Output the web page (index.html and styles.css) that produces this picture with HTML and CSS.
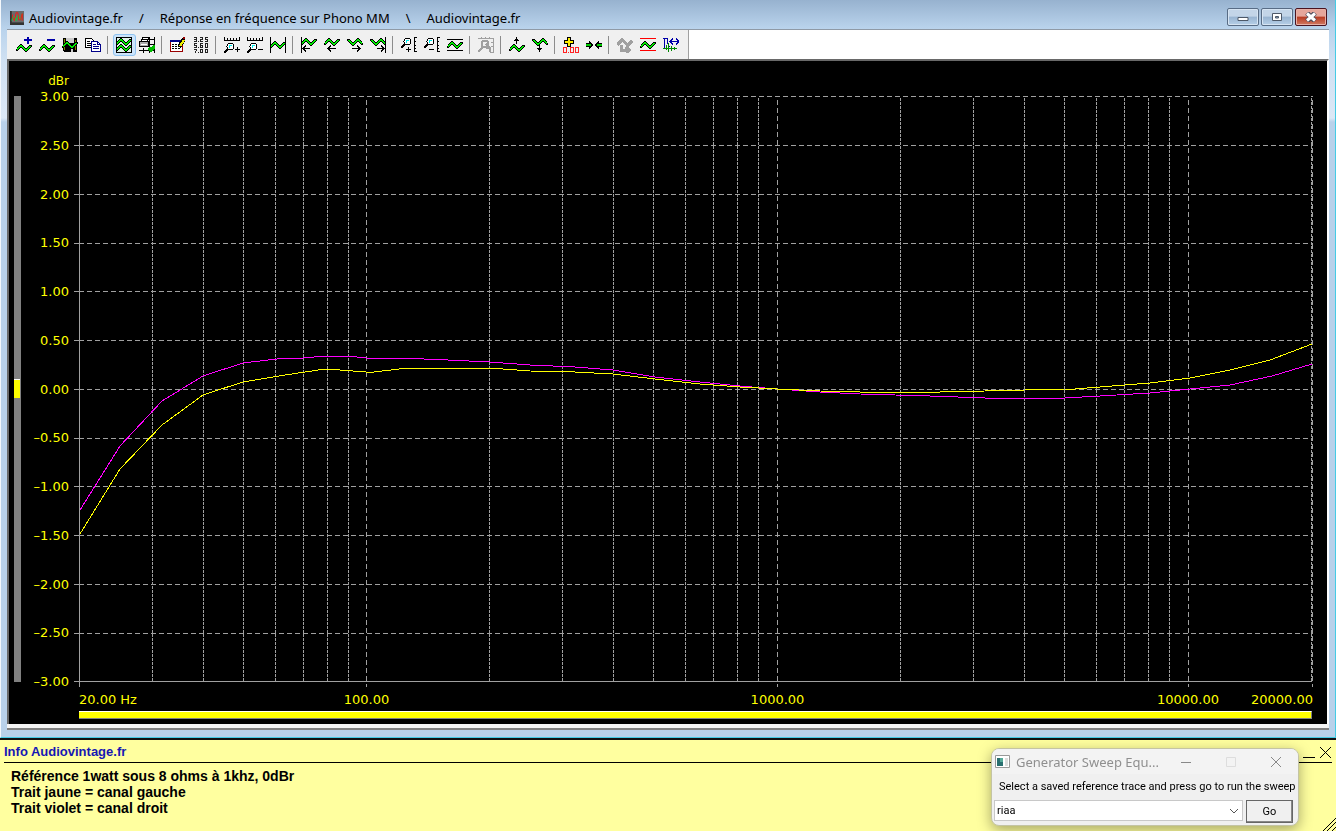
FILE: index.html
```html
<!DOCTYPE html>
<html lang="fr">
<head>
<meta charset="utf-8">
<title>Audiovintage.fr</title>
<link rel="stylesheet" href="styles.css">
</head>
<body>
<svg class="defs" aria-hidden="true">
  <symbol id="wave" viewBox="0 0 16 10"><path d="M.5 6v2M1.500 4v4M2.500 3v4M3.500 2v4M4.500 1v4M5.500 1v4M6.500 2v4M7.500 3v4M8.500 4v4M9.500 5v4M10.500 5v4M11.500 4v4M12.500 3v4M13.500 2v4M14.500 2v3M15.500 2v2" stroke="#000"/><path d="M1.500 5v2M2.500 4v2M3.500 3v2M4.500 2v2M5.500 2v2M6.500 3v2M7.500 4v2M8.500 5v2M9.500 6v2M10.500 6v2M11.500 5v2M12.500 4v2M13.500 3v2M14.500 3v1" stroke="#0e0"/></symbol>
  <symbol id="lens" viewBox="0 0 11 11"><path d="M4 7L0 11" stroke="#000" stroke-width="2"/><circle cx="6.500" cy="4.500" r="3.500" fill="#fff" stroke="#000"/><path d="M5 3h3v1H6v2H5z" fill="#0ee"/></symbol>
  <symbol id="ruler" viewBox="0 0 16 4"><path d="M0 3.500h16M.5 0v3M3.500 1v2M6.500 1v2M9.500 1v2M12.500 1v2M15.500 0v3" fill="none" stroke="#000"/></symbol>
</svg>
<main class="window">
  <header class="titlebar">
    <svg class="app-icon" viewBox="0 0 16 16"><path d="M0 0h16v16H0z" fill="#333"/><path d="M2 0h14v13H2z" fill="#6b6b6b"/><path d="M2 11l2-5 3 5 2-6 3 5 2-7" fill="none" stroke="#0d3"/><path d="M3 4v3l2 4 2-9h2l1 8 2 0 2-7v8" fill="none" stroke="#f11"/></svg>
    <h1 class="title"><span>Audiovintage.fr</span><span>/</span><span>Réponse en fréquence sur Phono MM</span><span>\</span><span>Audiovintage.fr</span></h1>
    <div class="window-buttons">
      <button class="wbtn" aria-label="Réduire"><svg viewBox="0 0 12 10"><path d="M1 5.500h10v3H1z" fill="#fff" stroke="#4d5868"/></svg></button>
      <button class="wbtn" aria-label="Agrandir"><svg viewBox="0 0 12 10"><path d="M1.500 1.500h9v7h-9z" fill="#fff" stroke="#4d5868"/><path d="M4.500 4.500h3v1.500h-3z" fill="#8ba8c6" stroke="#4d5868"/></svg></button>
      <button class="wbtn wbtn-close" aria-label="Fermer"><svg viewBox="0 0 12 10"><path d="M2 1l8 8M10 1L2 9" stroke="#4a4a5a" stroke-width="5"/><path d="M2 1.500l8 7M10 1.500l-8 7" stroke="#fff" stroke-width="3"/></svg></button>
    </div>
  </header>
  <div class="toolbar-row">
    <nav class="toolbar" aria-label="Outils">
      <button aria-label="Ajouter une trace"><svg viewBox="0 0 16 16"><use href="#wave" y="6" width="16" height="10"/><path d="M12 0v7M8 3h8" stroke="#00a" stroke-width="2"/></svg></button>
      <button aria-label="Retirer une trace"><svg viewBox="0 0 16 16"><use href="#wave" y="6" width="16" height="10"/><path d="M8 3h8" stroke="#00a" stroke-width="2"/></svg></button>
      <button aria-label="Enregistrer"><svg viewBox="0 0 16 16"><path d="M1 1h14v14H2l-1-1z" fill="#000"/><path d="M2 2h1v11H2zM13 3h1v10h-1z" fill="#880"/><path d="M4 1h8v5H4zM9 12h2v3H9z" fill="#ccc"/><use href="#wave" y="3" width="16" height="10"/></svg></button>
      <button aria-label="Copier"><svg viewBox="0 0 16 16"><path d="M.5 1.500h6l3 3v6h-9z" fill="#fff" stroke="#000"/><path d="M2 4.500h3M2 6.500h4M2 8.500h4" stroke="#000"/><path d="M6.500 4.500h6l3 3v7h-9z" fill="#fff" stroke="#008"/><path d="M12.500 4.500v3h3M8 7.500h3M8 9.500h6M8 11.500h6" stroke="#008" fill="none"/></svg></button>
      <i class="sep"></i>
      <button class="active" aria-pressed="true" aria-label="Afficher les traces"><svg viewBox="0 0 16 16"><path d="M.5.5h15v15H.5z" fill="#dff3ea" stroke="#000"/><use href="#wave" y="0" width="16" height="10"/><use href="#wave" y="6" width="16" height="10"/><path d="M.5.5h15v15H.5z" fill="none" stroke="#000"/></svg></button>
      <button aria-label="Imprimer"><svg viewBox="0 0 16 16"><path d="M3.500.5h6l-1 4h-6z" fill="#fff" stroke="#000"/><path d="M4 2.500h4" stroke="#000"/><path d="M.5 4.500h9v5h-9z" fill="#aaa" stroke="#000"/><path d="M2 7h6v1H2z" fill="#fff"/><path d="M0 13.500h16M4.500 11v5M10.500 0v16M15.500 0v16M11 2.500h5M11 7.500h5" stroke="#000"/><path d="M10 11l2 2 4-4" fill="none" stroke="#0b0" stroke-width="3"/></svg></button>
      <i class="sep"></i>
      <button aria-label="Modifier le tableau"><svg viewBox="0 0 16 16"><path d="M.5 3.500h12v11H.5z" fill="#fff" stroke="#900"/><path d="M0 3h13v2H0z" fill="#008"/><path d="M2 7.500h9M2 9.500h9M2 11.500h9" stroke="#000" stroke-dasharray="2 1"/><path d="M9 10l5-8" stroke="#000" stroke-width="4"/><path d="M10 9l4-6" stroke="#ee0" stroke-width="2"/><path d="M13 0h2v2h-2z" fill="#900"/></svg></button>
      <button aria-label="Valeurs"><svg viewBox="0 0 16 16"><path d="M1 .5h2.500v4H1M1 2.500h2M7 .5h2.500v2h-2v2H10M15 .5h-2.500v2h2v2H12M4 6.500H1.500v2h2v2H1M10 6.500H7.500v4h2v-2h-2M12.500 6.500h2v4h-2zM1 12.500h2.500l-1 3.500M7.500 12.500h2v3h-2zM12.500 12.500h2v3h-2zM5 4.500h1M5 10.500h1M5 15.500h1" fill="none" stroke="#222"/></svg></button>
      <i class="sep"></i>
      <button aria-label="Zoom avant horizontal"><svg viewBox="0 0 16 16"><use href="#ruler" width="16" height="4"/><use href="#lens" y="5" width="11" height="11"/><path d="M11 12.500h5M13.500 10v5" stroke="#000"/></svg></button>
      <button aria-label="Zoom arrière horizontal"><svg viewBox="0 0 16 16"><use href="#ruler" width="16" height="4"/><use href="#lens" y="5" width="11" height="11"/><path d="M11 12.500h5" stroke="#000"/></svg></button>
      <button aria-label="Ajuster la largeur"><svg viewBox="0 0 16 16"><use href="#wave" y="3" width="16" height="10"/><path d="M.5 0v16M15.500 0v16" stroke="#000"/></svg></button>
      <i class="sep"></i>
      <button aria-label="Début"><svg viewBox="0 0 16 16"><use href="#wave" width="16" height="10"/><path d="M.5 0v16M2 11.500h7M5 8.500l-3 3 3 3" fill="none" stroke="#000"/></svg></button>
      <button aria-label="Vers la gauche"><svg viewBox="0 0 16 16"><use href="#wave" width="16" height="10"/><path d="M4 11.500h8M7 8.500l-3 3 3 3" fill="none" stroke="#000"/></svg></button>
      <button aria-label="Vers la droite"><svg viewBox="0 0 16 16"><g transform="matrix(-1 0 0 1 16 0)"><use href="#wave" width="16" height="10"/></g><path d="M5 11.500h8M10 8.500l3 3-3 3" fill="none" stroke="#000"/></svg></button>
      <button aria-label="Fin"><svg viewBox="0 0 16 16"><g transform="matrix(-1 0 0 1 16 0)"><use href="#wave" width="16" height="10"/></g><path d="M15.500 0v16M7 11.500h7M11 8.500l3 3-3 3" fill="none" stroke="#000"/></svg></button>
      <i class="sep"></i>
      <button aria-label="Zoom avant vertical"><svg viewBox="0 0 16 16"><use href="#lens" width="11" height="11"/><path d="M5 12.500h5M7.500 10v5M16 .5h-2.500v14H16M13 4.500h2M13 8.500h2M13 11.500h2" fill="none" stroke="#000"/></svg></button>
      <button aria-label="Zoom arrière vertical"><svg viewBox="0 0 16 16"><use href="#lens" width="11" height="11"/><path d="M5 12.500h5M16 .5h-2.500v14H16M13 4.500h2M13 8.500h2M13 11.500h2" fill="none" stroke="#000"/></svg></button>
      <button aria-label="Ajuster la hauteur"><svg viewBox="0 0 16 16"><path d="M0 2.500h16M0 13.500h16" stroke="#000"/><use href="#wave" y="3" width="16" height="10"/></svg></button>
      <i class="sep"></i>
      <button disabled aria-label="Annuler le zoom"><svg viewBox="0 0 16 16"><path d="M0 1.500h15.500v14H12M13 5.500h2M13 9.500h2M3.500 0v2M7.500 0v2M11.500 0v2" fill="none" stroke="#a0a0a0"/><circle cx="7" cy="7" r="3.500" fill="none" stroke="#a0a0a0" stroke-width="2"/><path d="M0 15l5-5M8 7l4 4v4M8 11l4 0" fill="none" stroke="#a0a0a0" stroke-width="2"/></svg></button>
      <i class="sep"></i>
      <button aria-label="Monter"><svg viewBox="0 0 16 16"><use href="#wave" y="6" width="16" height="10"/><path d="M7.500 0v7M5 3.500h5M6 2.500h3" fill="none" stroke="#000"/></svg></button>
      <button aria-label="Descendre"><svg viewBox="0 0 16 16"><g transform="matrix(-1 0 0 1 16 0)"><use href="#wave" width="16" height="10"/></g><path d="M7.500 8v7M5 11.500h5M6 12.500h3" fill="none" stroke="#000"/></svg></button>
      <i class="sep"></i>
      <button aria-label="Remettre à zéro"><svg viewBox="0 0 16 16"><path d="M6 0v10M1 5h10" stroke="#000" stroke-width="4"/><path d="M6 1v8M2 5h8" stroke="#fe0" stroke-width="2"/><path d="M.5 10.500h3v5h-3zM7.500 10.500h3v5h-3zM12.500 10.500h3v5h-3zM5 15.500h1" fill="none" stroke="#f22"/></svg></button>
      <button aria-label="Rapprocher"><svg viewBox="0 0 16 16"><path d="M0 6.500h5M0 9.500h5M11 6.500h5M11 9.500h5M3.500 4v2M4.500 5v1M5.500 6v4M6.500 7v2M3.500 10v2M4.500 10v1M12.500 4v2M11.500 5v1M10.500 6v4M9.500 7v2M12.500 10v2M11.500 10v1" stroke="#000"/><path d="M0 8h5M11 8h5" stroke="#0c0" stroke-width="2"/></svg></button>
      <i class="sep"></i>
      <button disabled aria-label="Inverser"><svg viewBox="0 0 16 16"><path d="M0 8l5-5 6 5 4-4M4 8v5h8M9 10l3 3-3 3" fill="none" stroke="#a0a0a0" stroke-width="3"/></svg></button>
      <button aria-label="Limites"><svg viewBox="0 0 16 16"><path d="M0 1.500h16M0 13.500h16" stroke="#f00"/><use href="#wave" y="3" width="16" height="10"/></svg></button>
      <button aria-label="Curseurs"><svg viewBox="0 0 16 16"><path d="M1.500 1v11M0 1.500h5M4.500 1v5l2 4M7 4.500h9M10 1.500L7 4.500l3 3M13 1.500l3 3-3 3" fill="none" stroke="#00a"/><path d="M0 11.500h14M3.500 8v5M5.500 6v9M8.500 9v5M11.500 10v3" stroke="#080"/></svg></button>
    </nav>
  </div>
  <section class="chart" aria-label="Réponse en fréquence">
    <div class="unit">dBr</div>
    <div class="level"><span class="level-thumb"></span></div>
    <ol class="y-axis">
      <li>3.00</li><li>2.50</li><li>2.00</li><li>1.50</li><li>1.00</li><li>0.50</li><li>0.00</li><li>–0.50</li><li>–1.00</li><li>–1.50</li><li>–2.00</li><li>–2.50</li><li>–3.00</li>
    </ol>
    <svg class="plot" viewBox="0 0 1234 586" preserveAspectRatio="none">
      <path class="grid" d="M0 .5H1234M0 49.500H1234M0 98.500H1234M0 147.500H1234M0 195.500H1234M0 244.500H1234M0 293.500H1234M0 342.500H1234M0 390.500H1234M0 439.500H1234M0 488.500H1234M0 537.500H1234"/>
      <path class="grid major" d="M287.500 4V591M698.500 4V591M1109.500 4V591M1233.500 4V591"/>
      <path class="grid minor" d="M73.500 2V586M124.500 2V586M164.500 2V586M196.500 2V586M224.500 2V586M248.500 2V586M269.500 2V586M410.500 2V586M483.500 2V586M534.500 2V586M574.500 2V586M606.500 2V586M634.500 2V586M658.500 2V586M679.500 2V586M821.500 2V586M894.500 2V586M945.500 2V586M985.500 2V586M1017.500 2V586M1045.500 2V586M1069.500 2V586M1090.500 2V586M1232.500 2V586"/>
      <path class="axis" d="M.5 0V591M-5 585.500H1233M-5 .5H0M-5 49.500H0M-5 98.500H0M-5 147.500H0M-5 195.500H0M-5 244.500H0M-5 293.500H0M-5 342.500H0M-5 390.500H0M-5 439.500H0M-5 488.500H0M-5 537.500H0"/>
      <polyline class="trace right" points="1,414 41,350 83,305 124,280 164,267 206,262 224,262 246,260 268,260 287,262 321,262 369,264 411,266 451,269 496,271 534,274 576,281 621,286 661,290 698,293 741,296 781,298 851,300 906,302 986,302 1021,300 1071,297 1111,293 1151,289 1193,280 1233,268"/>
      <polyline class="trace left" points="1,438 41,373 83,329 124,299 164,286 206,279 246,273 261,274 287,276 295,276 329,272 411,272 451,275 496,276 534,278 576,283 621,288 661,291 698,293 741,295 781,296 861,296 906,295 946,294 986,293 996,293 1033,290 1071,287 1111,282 1151,274 1191,264 1233,248"/>
    </svg>
    <ol class="x-axis">
      <li>20.00 Hz</li><li>100.00</li><li>1000.00</li><li class="x-10k">10000.00</li><li class="x-20k">20000.00</li>
    </ol>
    <div class="progress"></div>
  </section>
</main>
<section class="info">
  <header class="info-head">
    <h2>Info Audiovintage.fr</h2>
    <div class="info-buttons">
      <button aria-label="Réduire"><svg viewBox="0 0 13 13"><path d="M0 11.500h12" stroke="#000"/></svg></button>
      <button aria-label="Fermer"><svg viewBox="0 0 13 13"><path d="M1 1l11 11M12 1L1 12" stroke="#000"/></svg></button>
    </div>
  </header>
  <p>Référence 1watt sous 8 ohms à 1khz, 0dBr<br>Trait jaune = canal gauche<br>Trait violet = canal droit</p>
  <svg class="grip" viewBox="0 0 14 14"><path d="M0 14L14 0M4 14L14 4M9 14l5-5" stroke="#000"/></svg>
</section>
<div class="dialog" role="dialog" aria-labelledby="dlg-title">
  <header class="dialog-head">
    <svg class="dialog-icon" viewBox="0 0 15 13"><path d="M.5.5h14v12H.5z" fill="#fff" stroke="#999"/><path d="M2 3h6v8H2z" fill="#296f70"/><path d="M5 3h3v4H5z" fill="#5a9"/><path d="M10 3h3v8h-3z" fill="#ddd"/></svg>
    <h2 id="dlg-title">Generator Sweep Equ...</h2>
    <button aria-label="Minimize"><svg viewBox="0 0 12 12"><path d="M1 6.500h10" stroke="#888"/></svg></button>
    <button disabled aria-label="Maximize"><svg viewBox="0 0 12 12"><path d="M1.500 1.500h9v9h-9z" fill="none" stroke="#ddd"/></svg></button>
    <button aria-label="Close"><svg viewBox="0 0 12 12"><path d="M1 1l10 10M11 1L1 11" stroke="#888"/></svg></button>
  </header>
  <form class="dialog-body" onsubmit="return false">
    <label for="trace">Select a saved reference trace and press go to run the sweep</label>
    <div class="dialog-row">
      <div class="combo">
        <select id="trace"><option>riaa</option></select>
        <svg viewBox="0 0 10 6"><path d="M1 1l4 4 4-4" fill="none" stroke="#555"/></svg>
      </div>
      <button class="go">Go</button>
    </div>
  </form>
</div>
</body>
</html>
```
FILE: styles.css
```css
* { box-sizing: border-box; }
body {
  margin: 0;
  min-height: 100vh;
  display: flex;
  flex-direction: column;
  background: #ffff9f;
  color: #000;
}
h1, h2, p, ol { margin: 0; padding: 0; font-weight: normal; list-style: none; }
button { padding: 0; border: 0; background: none; font: inherit; }
svg { display: block; }
.defs { position: absolute; width: 0; height: 0; }

/* main window */
.window {
  flex: 1;
  display: flex;
  flex-direction: column;
  padding: 0 6px;
  background: linear-gradient(#97b2cf, #b9d3ec 28px, #cfe0f2 60px, #dce8f6 118px, #b9d1ea 122px);
  border: 1px solid #45cbe5;
  border-width: 0 1px 1px;
  border-left-color: #f4f8fc;
}
.titlebar {
  height: 30px;
  display: flex;
  align-items: center;
  padding: 6px 2px 0 3px;
  border-bottom: 1px solid #8f9aa6;
}
.app-icon { width: 14px; height: 14px; margin-right: 5px; }
.title {
  flex: 1;
  display: flex;
  gap: 16px;
  font: 13px/20px "Noto Sans", sans-serif;
  white-space: pre;
}
.window-buttons { display: flex; align-self: flex-start; gap: 2px; padding-top: 2px; }
.wbtn {
  width: 32px;
  height: 18px;
  display: grid;
  place-items: center;
  border: 1px solid #586c85;
  border-radius: 2px;
  background: linear-gradient(#c3d5e8 45%, #98b4d1 50%, #b6cfe7);
  box-shadow: inset 0 0 0 1px #d6e4f2;
}
.wbtn svg { width: 12px; height: 10px; }
.wbtn-close {
  border-color: #4a1420;
  background: linear-gradient(#e5a69b 45%, #b83b22 50%, #d07a62);
  box-shadow: inset 0 0 0 1px #e7b0a6;
}
.toolbar-row { display: flex; background: #fff; }
.toolbar {
  display: flex;
  align-items: center;
  height: 29px;
  padding: 1px 5px 0 6px;
  background: #f0f0f0;
  border-right: 1px solid #a0a0a0;
}
.toolbar button {
  width: 23px;
  height: 22px;
  display: flex;
  align-items: center;
  padding-left: 2px;
  border: 1px solid transparent;
  border-radius: 3px;
}
.toolbar button.active { background: #cce4fb; border-color: #8fc3f0; }
.toolbar svg { width: 16px; height: 16px; shape-rendering: crispEdges; }
.sep { width: 1px; height: 18px; margin: 0 5px 0 2px; background: #8c8c8c; }

/* chart */
.chart {
  flex: 1;
  display: grid;
  grid-template-columns: 5px 7px 48px 10px minmax(0, 1fr);
  grid-template-rows: 35px minmax(400px, 1fr) 29px 8px;
  padding: 0 14px 5px 0;
  background: #000;
  color: #ff0;
  border: solid #696969;
  border-width: 2px 2px 0 2px;
  border-right-color: #fff;
  box-shadow: 0 4px 0 #f4f4f4, 0 6px 0 #808080;
  margin-bottom: 13px;
  font: 13px/16px "DejaVu Sans", sans-serif;
}
.unit { grid-area: 1 / 3; align-self: end; text-align: right; padding-bottom: 7px; font-size: 12px; }
.level { grid-area: 2 / 2; position: relative; background: #808080; }
.level-thumb {
  position: absolute;
  left: 0;
  right: 1px;
  top: calc(50% - 10px);
  height: 19px;
  background: #ff0;
  border-top: 1px solid #fff;
}
.y-axis {
  grid-area: 2 / 3;
  display: flex;
  flex-direction: column;
  justify-content: space-between;
  margin: -7px 0 -8px;
  text-align: right;
  white-space: nowrap;
}
.plot { grid-area: 2 / 5; width: 100%; height: 100%; overflow: visible; shape-rendering: crispEdges; }
.plot * { vector-effect: non-scaling-stroke; fill: none; stroke: #a0a0a0; stroke-width: 1px; }
.grid { stroke-dasharray: 5 3; }
.plot .major { stroke-dasharray: 5 3; }
.plot .minor { stroke-dasharray: 3 1; }
.plot .right { stroke: #f0f; }
.plot .left { stroke: #ff0; }
.x-axis {
  grid-area: 3 / 5;
  display: grid;
  grid-template-columns: 82fr 411fr 411fr 148fr 114fr 68fr;
  padding-top: 10px;
  text-align: center;
  white-space: nowrap;
}
.x-axis li:first-child { text-align: left; }
.x-10k { grid-column: 5; }
.x-20k { grid-column: 6; justify-self: end; }
.progress {
  grid-area: 4 / 5;
  margin-right: 1px;
  background: #ff0;
  border: solid #808080;
  border-width: 1px 1px 1px 0;
  border-top-color: #fff;
}

/* info panel */
.info {
  position: relative;
  padding: 1px 4px 16px;
  border-top: 2px solid #111;
  font: bold 13px/16px "Liberation Sans", Arial, sans-serif;
}
.info-head {
  display: flex;
  justify-content: space-between;
  height: 22px;
  border-bottom: 1px solid #000;
}
.info-head h2 { font: inherit; line-height: 22px; color: #1616b4; }
.info-buttons { display: flex; gap: 3px; padding-top: 2px; }
.info-buttons svg { width: 13px; height: 13px; }
.info p { padding: 5px 7px 0; font-size: 14px; font-weight: bold; }
.grip { position: absolute; right: 0; bottom: 0; width: 14px; height: 14px; }

/* floating dialog */
.dialog {
  position: fixed;
  right: 37px;
  bottom: 5px;
  width: 308px;
  padding-bottom: 2px;
  background: #f0f0f0;
  border: 1px solid #c4c4a4;
  border-radius: 8px;
  box-shadow: 0 4px 14px rgba(0, 0, 0, .35);
  overflow: hidden;
}
.dialog-head {
  display: flex;
  align-items: center;
  height: 25px;
  padding-left: 3px;
  background: #f3f3f3;
}
.dialog-head h2 { flex: 1; margin-left: 6px; font: 13px/20px "Noto Sans", sans-serif; color: #8f8f8f; white-space: nowrap; }
.dialog-icon { width: 15px; height: 13px; }
.dialog-head button { width: 45px; display: grid; place-items: center; }
.dialog-head svg { flex: none; }
.dialog-head button svg { width: 12px; height: 12px; }
.dialog-body { font: 11px/16px Roboto, Arial, sans-serif; padding: 5px 5px 0 2px; }
.dialog-body label { display: block; padding-left: 5px; white-space: nowrap; }
.dialog-row { display: flex; gap: 3px; margin-top: 5px; }
.combo { position: relative; flex: 1; height: 22px; }
.combo select {
  appearance: none;
  width: 100%;
  height: 21px;
  padding: 0 2px;
  border: 1px solid #c8c8c8;
  border-radius: 0;
  background: #fff;
  font: inherit;
  color: #000;
}
.combo svg { position: absolute; right: 4px; top: 8px; width: 10px; height: 6px; pointer-events: none; }
.go { width: 47px; height: 23px; border: 1px solid #666; background: #f0f0f0; box-shadow: inset -1px -1px 0 #888; }
```
